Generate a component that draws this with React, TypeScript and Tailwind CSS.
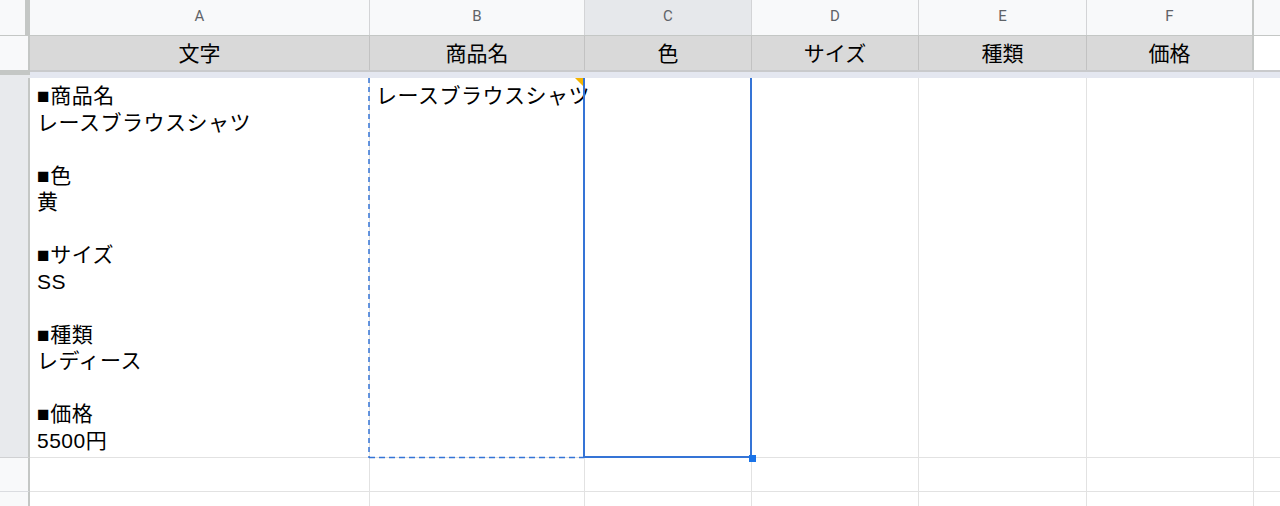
const font = "font-['Liberation_Sans','Noto_Sans_CJK_JP',sans-serif]";

const cols = [
  { key: "A", w: "w-[340px]", title: "文字" },
  { key: "B", w: "w-[215px]", title: "商品名" },
  { key: "C", w: "w-[167px]", title: "色" },
  { key: "D", w: "w-[167px]", title: "サイズ" },
  { key: "E", w: "w-[168px]", title: "種類" },
  { key: "F", w: "w-[167px]", title: "価格" },
];

const bodyText = `■商品名
レースブラウスシャツ

■色
黄

■サイズ
SS

■種類
レディース

■価格
5500円`;

const EmptyRow = ({ h }: { h: string }) => (
  <div className={`flex ${h}`}>
    <div className="w-[30px] shrink-0 border-r-2 border-b border-r-[#c4c7c5] border-b-[#dadce0] bg-[#f8f9fa]" />
    {cols.map((c) => (
      <div key={c.key} className={`${c.w} shrink-0 border-r border-b border-[#e2e2e2]`} />
    ))}
    <div className="flex-1 border-b border-[#e2e2e2]" />
  </div>
);

const App = () => {
  return (
    <div className={`h-[506px] w-[1280px] overflow-hidden bg-white text-black ${font}`}>
      {/* column letters */}
      <div className="flex h-[36px] border-b border-[#c4c7c5] bg-[#f8f9fa]">
        <div className="w-[30px] shrink-0 border-r-[5px] border-[#c4c7c5]" />
        {cols.map((c) => (
          <div
            key={c.key}
            className={`${c.w} shrink-0 flex items-center justify-center pb-[3px] border-r border-[#d3d4d6] font-['Roboto',sans-serif] text-[15px] text-[#5f6368] ${
              c.key === "C" ? "bg-[#e6e8eb]" : ""
            } ${c.key === "F" ? "border-r-2 border-r-[#c4c7c5]" : ""}`}
          >
            {c.key}
          </div>
        ))}
        <div className="flex-1" />
      </div>

      {/* row 1 : titles */}
      <div className="flex h-[34px]">
        <div className="w-[30px] shrink-0 border-r-2 border-[#c4c7c5] bg-[#f8f9fa]" />
        {cols.map((c) => (
          <div
            key={c.key}
            className={`${c.w} shrink-0 flex items-center justify-center border-r border-[#c2c2c2] bg-[#d9d9d9] text-[21px] leading-none ${
              c.key === "F" ? "border-r-2 border-r-[#c4c7c5]" : ""
            }`}
          >
            {c.title}
          </div>
        ))}
        <div className="flex-1" />
      </div>

      {/* frozen divider */}
      <div className="flex h-[8px]">
        <div className="w-[30px] shrink-0 flex flex-col">
          <div className="h-[5px] bg-[#c4c7c5]" />
          <div className="flex-1 bg-[#e8eaed]" />
        </div>
        <div className="flex-1 flex flex-col">
          <div className="h-[2px] bg-[#c9cacc]" />
          <div className="flex-1 bg-[#e4e7f0]" />
        </div>
      </div>

      {/* row 2 */}
      <div className="flex h-[380px]">
        <div className="w-[30px] shrink-0 border-r-2 border-b border-r-[#c4c7c5] border-b-[#d0d1d3] bg-[#e8eaed]" />
        <div className="w-[340px] shrink-0 border-r border-b border-[#e2e2e2] px-[7px] pt-[5px] text-[21px] leading-[26.5px] tracking-[0.5px] whitespace-pre-line">
          {bodyText}
        </div>
        <div className="relative w-[215px] shrink-0 border-r border-b border-[#e2e2e2]">
          <div className="px-[6px] pt-[5px] text-[21px] leading-[26.5px] whitespace-nowrap tracking-[0.5px]">
            レースブラウスシャツ
          </div>
          <svg className="absolute -left-[2px] top-0 h-[381px] w-[218px]" viewBox="0 0 218 381">
            <line x1="1" y1="0" x2="1" y2="380" stroke="#3574d6" strokeWidth="1.5" strokeDasharray="5 4" />
            <line x1="1" y1="379.5" x2="216" y2="379.5" stroke="#3574d6" strokeWidth="1.5" strokeDasharray="6 4" />
          </svg>
          <div className="absolute right-0 top-0 h-0 w-0 border-l-[9px] border-t-[9px] border-l-transparent border-t-[#f4b400]" />
        </div>
        <div className="relative w-[167px] shrink-0 border-r border-b border-[#e2e2e2]">
          <div className="absolute -left-[2px] -right-px top-0 -bottom-px border-x-2 border-b-2 border-[#3574d6]" />
          <div className="absolute -right-[5px] -bottom-[5px] h-[7px] w-[7px] bg-[#1a73e8]" />
        </div>
        {cols.slice(3).map((c) => (
          <div key={c.key} className={`${c.w} shrink-0 border-r border-b border-[#e2e2e2]`} />
        ))}
        <div className="flex-1 border-b border-[#e2e2e2]" />
      </div>

      <EmptyRow h="h-[34px]" />
      <EmptyRow h="h-[34px]" />
    </div>
  );
};

export default App;
